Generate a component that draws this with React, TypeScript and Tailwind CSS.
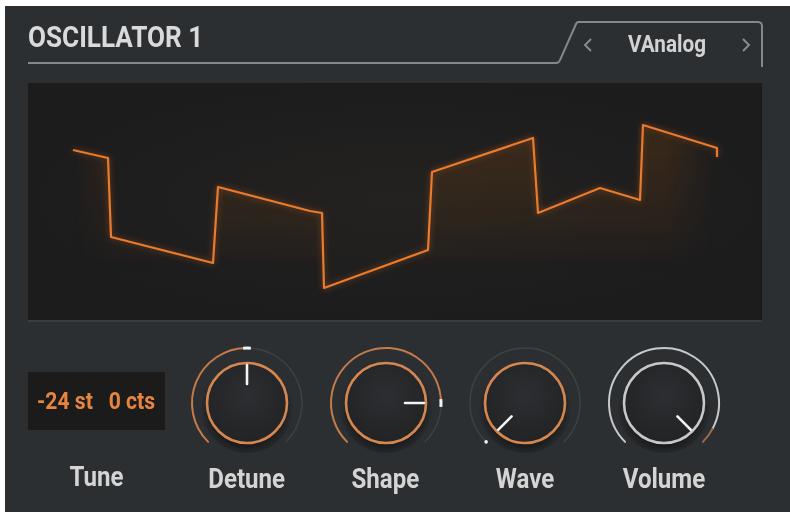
import React from "react";

const FONT = { fontFamily: "Roboto, 'DejaVu Sans', sans-serif" };

function polar(cx: number, cy: number, r: number, a: number) {
  const rad = (a * Math.PI) / 180;
  return [cx + r * Math.sin(rad), cy - r * Math.cos(rad)];
}

function arc(cx: number, cy: number, r: number, a1: number, a2: number) {
  const [x1, y1] = polar(cx, cy, r, a1);
  const [x2, y2] = polar(cx, cy, r, a2);
  const large = a2 - a1 > 180 ? 1 : 0;
  return `M ${x1.toFixed(2)} ${y1.toFixed(2)} A ${r} ${r} 0 ${large} 1 ${x2.toFixed(2)} ${y2.toFixed(2)}`;
}

type Seg = { from: number; to: number; color: string; width: number };

function Knob({
  segs,
  ring,
  indicator,
  marks,
  id,
}: {
  segs: Seg[];
  ring: string;
  indicator: number;
  marks: { a: number; kind: "bar" | "dot" }[];
  id: string;
}) {
  const c = 60;
  const [ix1, iy1] = polar(c, c, 19, indicator);
  const [ix2, iy2] = polar(c, c, 38, indicator);
  return (
    <svg width="120" height="120" viewBox="0 0 120 120">
      <defs>
        <radialGradient id={`sh-${id}`} cx="50%" cy="55%" r="50%">
          <stop offset="70%" stopColor="#111213" stopOpacity="0.8" />
          <stop offset="100%" stopColor="#111213" stopOpacity="0" />
        </radialGradient>
        <radialGradient id={`bd-${id}`} cx="50%" cy="40%" r="60%">
          <stop offset="0%" stopColor="#2c2e31" />
          <stop offset="100%" stopColor="#212325" />
        </radialGradient>
      </defs>
      {segs.map((s, i) => (
        <path key={i} d={arc(c, c, 55, s.from, s.to)} fill="none" stroke={s.color} strokeWidth={s.width} strokeLinecap="round" />
      ))}
      {marks.map((m, i) => {
        if (m.kind === "bar") {
          return <path key={i} d={arc(c, c, 55, m.a - 4, m.a + 4)} fill="none" stroke="#f2f2f2" strokeWidth={3} />;
        }
        const [x, y] = polar(c, c, 55, m.a);
        return <circle key={i} cx={x} cy={y} r={1.8} fill="#f0f0f0" />;
      })}
      <circle cx={c} cy={c + 3} r={47} fill={`url(#sh-${id})`} />
      <circle cx={c} cy={c} r={40} fill={`url(#bd-${id})`} stroke={ring} strokeWidth={2.6} />
      <line x1={ix1} y1={iy1} x2={ix2} y2={iy2} stroke="#f4f4f4" strokeWidth={2.6} strokeLinecap="round" />
    </svg>
  );
}

const COPPER = "#d6864f";
const ARC = "#c47a4a";
const DIM = "#3f4245";

function Waveform() {
  const pts: [number, number][] = [
    [45, 67],
    [80, 75],
    [83, 154],
    [185, 180],
    [190, 104],
    [282, 128],
    [294, 130],
    [296, 205],
    [400, 167],
    [404, 89],
    [505, 55],
    [510, 130],
    [572, 105],
    [612, 117],
    [615, 42],
    [689, 65],
    [689, 74],
  ];
  const line = pts.map((p, i) => `${i === 0 ? "M" : "L"} ${p[0]} ${p[1]}`).join(" ");
  const fill = `${line} L 689 237 L 45 237 Z`;
  return (
    <svg width="734" height="237" viewBox="0 0 734 237" className="block">
      <defs>
        <linearGradient id="wf" x1="0" y1="0" x2="0" y2="1">
          <stop offset="0.15" stopColor="#d86a1e" stopOpacity="0.13" />
          <stop offset="0.75" stopColor="#d86a1e" stopOpacity="0" />
        </linearGradient>
        <linearGradient id="wfx" x1="0" y1="0" x2="1" y2="0">
          <stop offset="0" stopColor="#fff" stopOpacity="0" />
          <stop offset="0.08" stopColor="#fff" stopOpacity="1" />
          <stop offset="0.92" stopColor="#fff" stopOpacity="1" />
          <stop offset="1" stopColor="#fff" stopOpacity="0" />
        </linearGradient>
        <mask id="wfm">
          <rect x="45" y="0" width="644" height="237" fill="url(#wfx)" />
        </mask>
        <filter id="blur" x="-5%" y="-5%" width="110%" height="110%">
          <feGaussianBlur stdDeviation="3" />
        </filter>
      </defs>
      <path d={fill} fill="url(#wf)" mask="url(#wfm)" filter="url(#blur)" />
      <path d={line} fill="none" stroke="#e9782a" strokeWidth={2.2} strokeLinejoin="round" opacity="0.5" filter="url(#blur)" />
      <path d={line} fill="none" stroke="#ea7a2c" strokeWidth={2.2} strokeLinejoin="round" />
    </svg>
  );
}

export default function App() {
  return (
    <div className="w-[790px] h-[512px] bg-white overflow-hidden" style={FONT}>
      <div className="ml-[5px] mt-[6px] w-[785px] h-[506px] bg-[#2c2f32] flex flex-col">
        {/* Header */}
        <div className="flex h-[77px] pl-[23px] pr-[27px]">
          <div className="flex-1 h-[58px] border-b-2 border-[#85888b] flex items-start">
            <span className="mt-[14px] text-[29px] leading-[34px] font-bold text-[#dadada] origin-left scale-x-[0.9]">
              OSCILLATOR 1
            </span>
          </div>
          <svg width="21" height="58" viewBox="0 0 21 58" className="block shrink-0">
            <path d="M -1 57 Q 2 57 3 54 L 19 18 Q 20 16 22 16" fill="none" stroke="#85888b" strokeWidth="2" />
          </svg>
          <div className="w-[185px] mt-[15px] h-[46px] border-t-2 border-r-2 border-[#85888b] rounded-tr-[5px] flex items-center pl-[5px] pr-[10px]">
            <svg width="10" height="14" viewBox="0 0 10 14" className="block">
              <polyline points="8,1 2,7 8,13" fill="none" stroke="#8c8f92" strokeWidth="1.8" />
            </svg>
            <span className="flex-1 text-center text-[23px] leading-[26px] font-bold text-[#d2d2d2] scale-x-[0.9]">VAnalog</span>
            <svg width="10" height="14" viewBox="0 0 10 14" className="block">
              <polyline points="2,1 8,7 2,13" fill="none" stroke="#8c8f92" strokeWidth="1.8" />
            </svg>
          </div>
        </div>

        {/* Display */}
        <div className="ml-[23px] w-[734px] h-[237px] bg-[radial-gradient(ellipse_at_center,#242220_0%,#1c1c1d_75%)] shadow-[0_2px_0_#393c3f]">
          <Waveform />
        </div>

        {/* Controls */}
        <div className="flex pl-[23px]">
          <div className="w-[137px] mr-[12px] flex flex-col items-center">
            <div className="mt-[52px] w-[137px] h-[58px] bg-[#1b1b1b] flex items-center justify-center">
              <div className="flex gap-[18px] text-[24px] leading-[28px] font-bold text-[#e8843d] scale-x-[0.88]">
                <span>-24 st</span>
                <span>0 cts</span>
              </div>
            </div>
            <div className="mt-[32px] h-[30px] leading-[30px] text-[28px] font-bold text-[#d4d4d4] scale-x-[0.86]">Tune</div>
          </div>
          {[
            {
              name: "Detune",
              segs: [
                { from: -135, to: 0, color: ARC, width: 2 },
                { from: 0, to: 135, color: DIM, width: 1.4 },
              ],
              ring: COPPER,
              ind: 0,
              marks: [{ a: 0, kind: "bar" as const }],
            },
            {
              name: "Shape",
              segs: [
                { from: -135, to: 90, color: ARC, width: 2 },
                { from: 90, to: 135, color: DIM, width: 1.4 },
              ],
              ring: COPPER,
              ind: 90,
              marks: [{ a: 90, kind: "bar" as const }],
            },
            {
              name: "Wave",
              segs: [{ from: -135, to: 135, color: DIM, width: 1.4 }],
              ring: COPPER,
              ind: -135,
              marks: [{ a: -135, kind: "dot" as const }],
            },
            {
              name: "Volume",
              segs: [
                { from: -135, to: 118, color: "#c9c9c9", width: 2 },
                { from: 118, to: 135, color: "#a0694a", width: 2 },
              ],
              ring: "#c8c8c8",
              ind: 135,
              marks: [],
            },
          ].map((k) => (
            <div key={k.name} className="w-[139px] flex flex-col items-center">
              <div className="mt-[23px]">
                <Knob id={k.name} segs={k.segs} ring={k.ring} indicator={k.ind} marks={k.marks} />
              </div>
              <div className="mt-[1px] h-[30px] leading-[30px] text-[28px] font-bold text-[#d4d4d4] scale-x-[0.86]">{k.name}</div>
            </div>
          ))}
        </div>
      </div>
    </div>
  );
}
